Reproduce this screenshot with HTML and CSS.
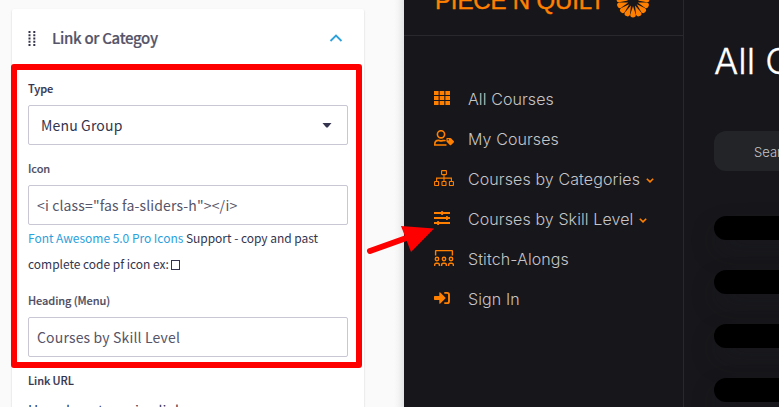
FILE: index.html
```html
<!DOCTYPE html>
<html lang="en">
<head>
<meta charset="utf-8">
<title>Menu settings</title>
<link rel="stylesheet" href="styles.css">
</head>
<body>
<main class="screen">
  <section class="editor">
    <div class="card">
      <header class="card-head">
        <svg class="grip" width="8" height="15" viewBox="0 0 8 15"><path d="M1.5 0v15M6.3 0v15" stroke="#34344e" stroke-width="2" stroke-dasharray="2 1.25"/></svg>
        <h2 class="card-title">Link or Categoy</h2>
        <svg class="collapse" width="14" height="8" viewBox="0 0 14 8"><path d="M1.5 7 7 1.5 12.5 7" fill="none" stroke="#2ca1dc" stroke-width="1.8"/></svg>
      </header>
      <div class="fields">
        <div class="field">
          <div class="label dark">Type</div>
          <div class="box select"><span>Menu Group</span><svg width="10" height="5" viewBox="0 0 10 5"><path d="M.5 0h9L5.7 4.4H4.3z" fill="#34344e"/></svg></div>
        </div>
        <div class="field">
          <div class="label">Icon</div>
          <div class="box code"><span>&lt;i class="fas fa-sliders-h"&gt;&lt;/i&gt;</span></div>
          <p class="help"><a>Font Awesome 5.0 Pro Icons</a> Support - copy and past<br>complete code pf icon ex: <i class="missing"></i></p>
        </div>
        <div class="field">
          <div class="label">Heading (Menu)</div>
          <div class="box"><span>Courses by Skill Level</span></div>
        </div>
        <div class="field">
          <div class="label dark">Link URL</div>
          <div class="hint">How do entry using link</div>
        </div>
      </div>
    </div>
  </section>
  <section class="preview">
    <aside class="sidebar">
      <div class="brand">
        <span class="brand-name">PIECE N QUILT</span>
        <svg class="flower" width="34" height="34" viewBox="-17 -17 34 34" fill="#ff8000">
          <defs><path id="petal" d="M0 5 2.8 13.8Q2.8 16.5 0 16.5T-2.8 13.8Z"/></defs>
          <use href="#petal"/><use href="#petal" transform="rotate(24)"/><use href="#petal" transform="rotate(48)"/><use href="#petal" transform="rotate(72)"/><use href="#petal" transform="rotate(96)"/><use href="#petal" transform="rotate(120)"/><use href="#petal" transform="rotate(144)"/><use href="#petal" transform="rotate(168)"/><use href="#petal" transform="rotate(192)"/><use href="#petal" transform="rotate(216)"/><use href="#petal" transform="rotate(240)"/><use href="#petal" transform="rotate(264)"/><use href="#petal" transform="rotate(288)"/><use href="#petal" transform="rotate(312)"/><use href="#petal" transform="rotate(336)"/>
        </svg>
      </div>
      <nav class="menu">
        <a class="item"><svg class="icon" viewBox="0 0 20 16" fill="#ff8000"><path d="M0 1h4.6v4H0zM5.7 1h4.6v4H5.7zM11.4 1H16v4h-4.6zM0 6h4.6v4H0zM5.7 6h4.6v4H5.7zM11.4 6H16v4h-4.6zM0 11h4.6v4H0zM5.7 11h4.6v4H5.7zM11.4 11H16v4h-4.6z"/></svg><span>All Courses</span></a>
        <a class="item"><svg class="icon" viewBox="0 0 20 16" fill="none" stroke="#ff8000" stroke-width="1.6"><circle cx="7" cy="4.3" r="3.6"/><path d="M12.5 15H.8v-.9c0-2.2 1.5-3.7 3.6-3.7 1 0 1.4.5 2.6.5 1.7 0 2.8-1 4.6-.2"/><path d="M13 8h3.2q.5 0 .8.3l2.7 2.8q.6.7 0 1.3l-2.6 2.6q-.7.6-1.3 0L12.4 11.6V8.6q0-.6.6-.6z" fill="#ff8000" stroke="none"/><circle cx="14.2" cy="9.8" r=".7" fill="#17161a" stroke="none"/></svg><span>My Courses</span></a>
        <a class="item"><svg class="icon" viewBox="0 0 20 16" fill="none" stroke="#ff8000" stroke-width="1.1"><rect x="7.6" y=".6" width="4.8" height="4" rx=".5"/><rect x=".6" y="11.5" width="4" height="4" rx=".5"/><rect x="8" y="11.5" width="4" height="4" rx=".5"/><rect x="15.4" y="11.5" width="4" height="4" rx=".5"/><path d="M10 4.6v6.9M2.6 11.5V8.1h14.8v3.4"/></svg><span>Courses by Categories</span><svg class="caret" viewBox="0 0 8 5"><path d="M.8.8 4 3.9 7.2.8"/></svg></a>
        <a class="item"><svg class="icon" viewBox="0 0 20 16" fill="#ff8000"><path d="M0 2h16v2H0zM0 7h16v2H0zM0 12h16v2H0z"/><rect x="7.2" y="1" width="1.8" height="4" rx=".5"/><rect x="12" y="6" width="1.8" height="4" rx=".5"/><rect x="3.2" y="11" width="1.8" height="4" rx=".5"/></svg><span>Courses by Skill Level</span><svg class="caret" viewBox="0 0 8 5"><path d="M.8.8 4 3.9 7.2.8"/></svg></a>
        <a class="item"><svg class="icon" viewBox="0 0 20 16" fill="none" stroke="#ff8000" stroke-width="1.4"><path d="M1.6 5.5V1.3q0-.7.7-.7h15.4q.7 0 .7.7v4.2"/><circle cx="3" cy="9" r="1.7"/><circle cx="10" cy="9" r="1.7"/><circle cx="17" cy="9" r="1.7"/><path d="M.6 16v-.8q0-2 1.6-2h1.6q1.6 0 1.6 2v.8M7.6 16v-.8q0-2 1.6-2h1.6q1.6 0 1.6 2v.8M14.6 16v-.8q0-2 1.6-2h1.6q1.6 0 1.6 2v.8"/></svg><span>Stitch-Alongs</span></a>
        <a class="item"><svg class="icon" viewBox="0 0 20 16"><path d="M.7 6h4.6V2.8q.2-1 1-.4l5 5q.5.6 0 1.2l-5 5q-.8.6-1-.4V10H.7q-.7 0-.7-.7V6.7Q0 6 .7 6z" fill="#ff8000"/><path d="M10.3 2.9h2.8q1.9 0 1.9 1.9v6.4q0 1.9-1.9 1.9h-2.8" fill="none" stroke="#ff8000" stroke-width="1.9"/></svg><span>Sign In</span></a>
      </nav>
    </aside>
    <div class="content">
      <h1 class="page-title">All Courses</h1>
      <div class="search">Search</div>
      <div class="bars"><div class="bar"></div><div class="bar"></div><div class="bar"></div><div class="bar"></div></div>
    </div>
  </section>
  <div class="frame"></div>
  <svg class="arrow" width="72" height="36" viewBox="366 222 72 36"><path d="M370 251 412 236" stroke="#f00" stroke-width="6" stroke-linecap="round"/><path d="M401 226 434 228.5 411 252z" fill="#f00"/></svg>
</main>
</body>
</html>
```
FILE: styles.css
```css
* { box-sizing: border-box; }
body { margin: 0; overflow: hidden; }
h1, h2, p { margin: 0; font-weight: 400; }
.screen { position: relative; display: flex; width: 779px; height: 407px; overflow: hidden; }
.editor {
  width: 404px; height: 407px; flex: none; padding: 9px 0 0 12px; overflow: hidden;
  background: linear-gradient(90deg, #fafafa 394px, #f5f5f5 398px, #e2e4e6 404px);
  font-family: "Noto Sans CJK SC", "Noto Sans", sans-serif; color: #34344e;
}
.card { width: 352px; height: 420px; background: #fff; border-radius: 2px; box-shadow: 0 1px 2px rgba(0,0,0,.2); }
.card-head { display: flex; align-items: center; height: 58px; padding: 0 21px 0 16px; }
.grip { margin-right: 16px; }
.card-title { flex: 1; font-size: 15px; font-weight: 500; color: #555468; line-height: 24px; letter-spacing: -.32px; -webkit-text-stroke: .2px #555468; }
.fields { padding: 9px 16px 0; }
.field { margin-bottom: 12px; }
.label { height: 24px; margin-bottom: 5px; font-size: 11px; line-height: 24px; font-weight: 500; color: #4e4d62; letter-spacing: -.08px; -webkit-text-stroke: .15px; }
.field + .field .label { margin-top: -1px; }
.dark { color: #34344e; }
.box { display: flex; align-items: center; height: 40px; padding: 0 8px; border: 1px solid #c8c7d3; border-radius: 2px; font-size: 14px; color: #555468; white-space: nowrap; letter-spacing: .16px; }
.code { letter-spacing: .14px; }
.select { justify-content: space-between; padding: 0 15px 0 12px; color: #34344e; }
.help { height: 52px; font-size: 12px; line-height: 26px; white-space: nowrap; letter-spacing: -.03px; }
.help a { color: #2ca1dc; }
.missing { display: inline-block; width: 9px; height: 10px; border: 1.5px solid #34344e; vertical-align: -1px; }
.hint { font-size: 14px; line-height: 26px; letter-spacing: .05px; }
.preview { display: flex; flex: 1; height: 407px; overflow: hidden; background: #17161a; font-family: Inter, sans-serif; }
.sidebar { width: 280px; flex: none; border-right: 1px solid #29282d; }
.brand { display: flex; height: 36px; padding-left: 31px; border-bottom: 1px solid #29282d; }
.brand-name { width: 181px; margin-top: -13px; font: 24px/28px "Liberation Sans", sans-serif; color: #ff8000; white-space: nowrap; letter-spacing: -.15px; -webkit-text-stroke: .4px #ff8000; }
.flower { margin-top: -16px; }
.menu { padding-top: 43px; }
.item { display: flex; align-items: center; height: 40px; padding-left: 30px; font-size: 16px; font-weight: 300; color: #c5c5c7; letter-spacing: .1px; white-space: nowrap; }
.icon { width: 20px; height: 16px; margin-right: 14px; margin-top: -2px; flex: none; }
.caret { width: 8px; height: 5px; margin: 3px 0 0 6px; fill: none; stroke: #ff8000; stroke-width: 1.6; }
.content { flex: none; width: 400px; padding: 39px 0 0 30px; }
.page-title { height: 44px; font-size: 36px; line-height: 44px; font-weight: 300; color: #fff; white-space: nowrap; -webkit-text-stroke: .3px #fff; }
.search { height: 40px; margin-top: 48px; padding-left: 40px; border-radius: 12px; background: #232427; font-size: 13px; line-height: 42px; font-weight: 300; color: #c5c5c7; }
.bars { display: grid; gap: 30px; margin-top: 45px; }
.bar { height: 24px; border-radius: 12px; background: #000; box-shadow: 0 12px 24px rgba(27,34,40,.3); }
.frame { position: absolute; left: 11px; top: 64px; width: 351px; height: 304px; border: 6px solid #f00; border-radius: 3px; }
.arrow { position: absolute; left: 366px; top: 222px; }
```
